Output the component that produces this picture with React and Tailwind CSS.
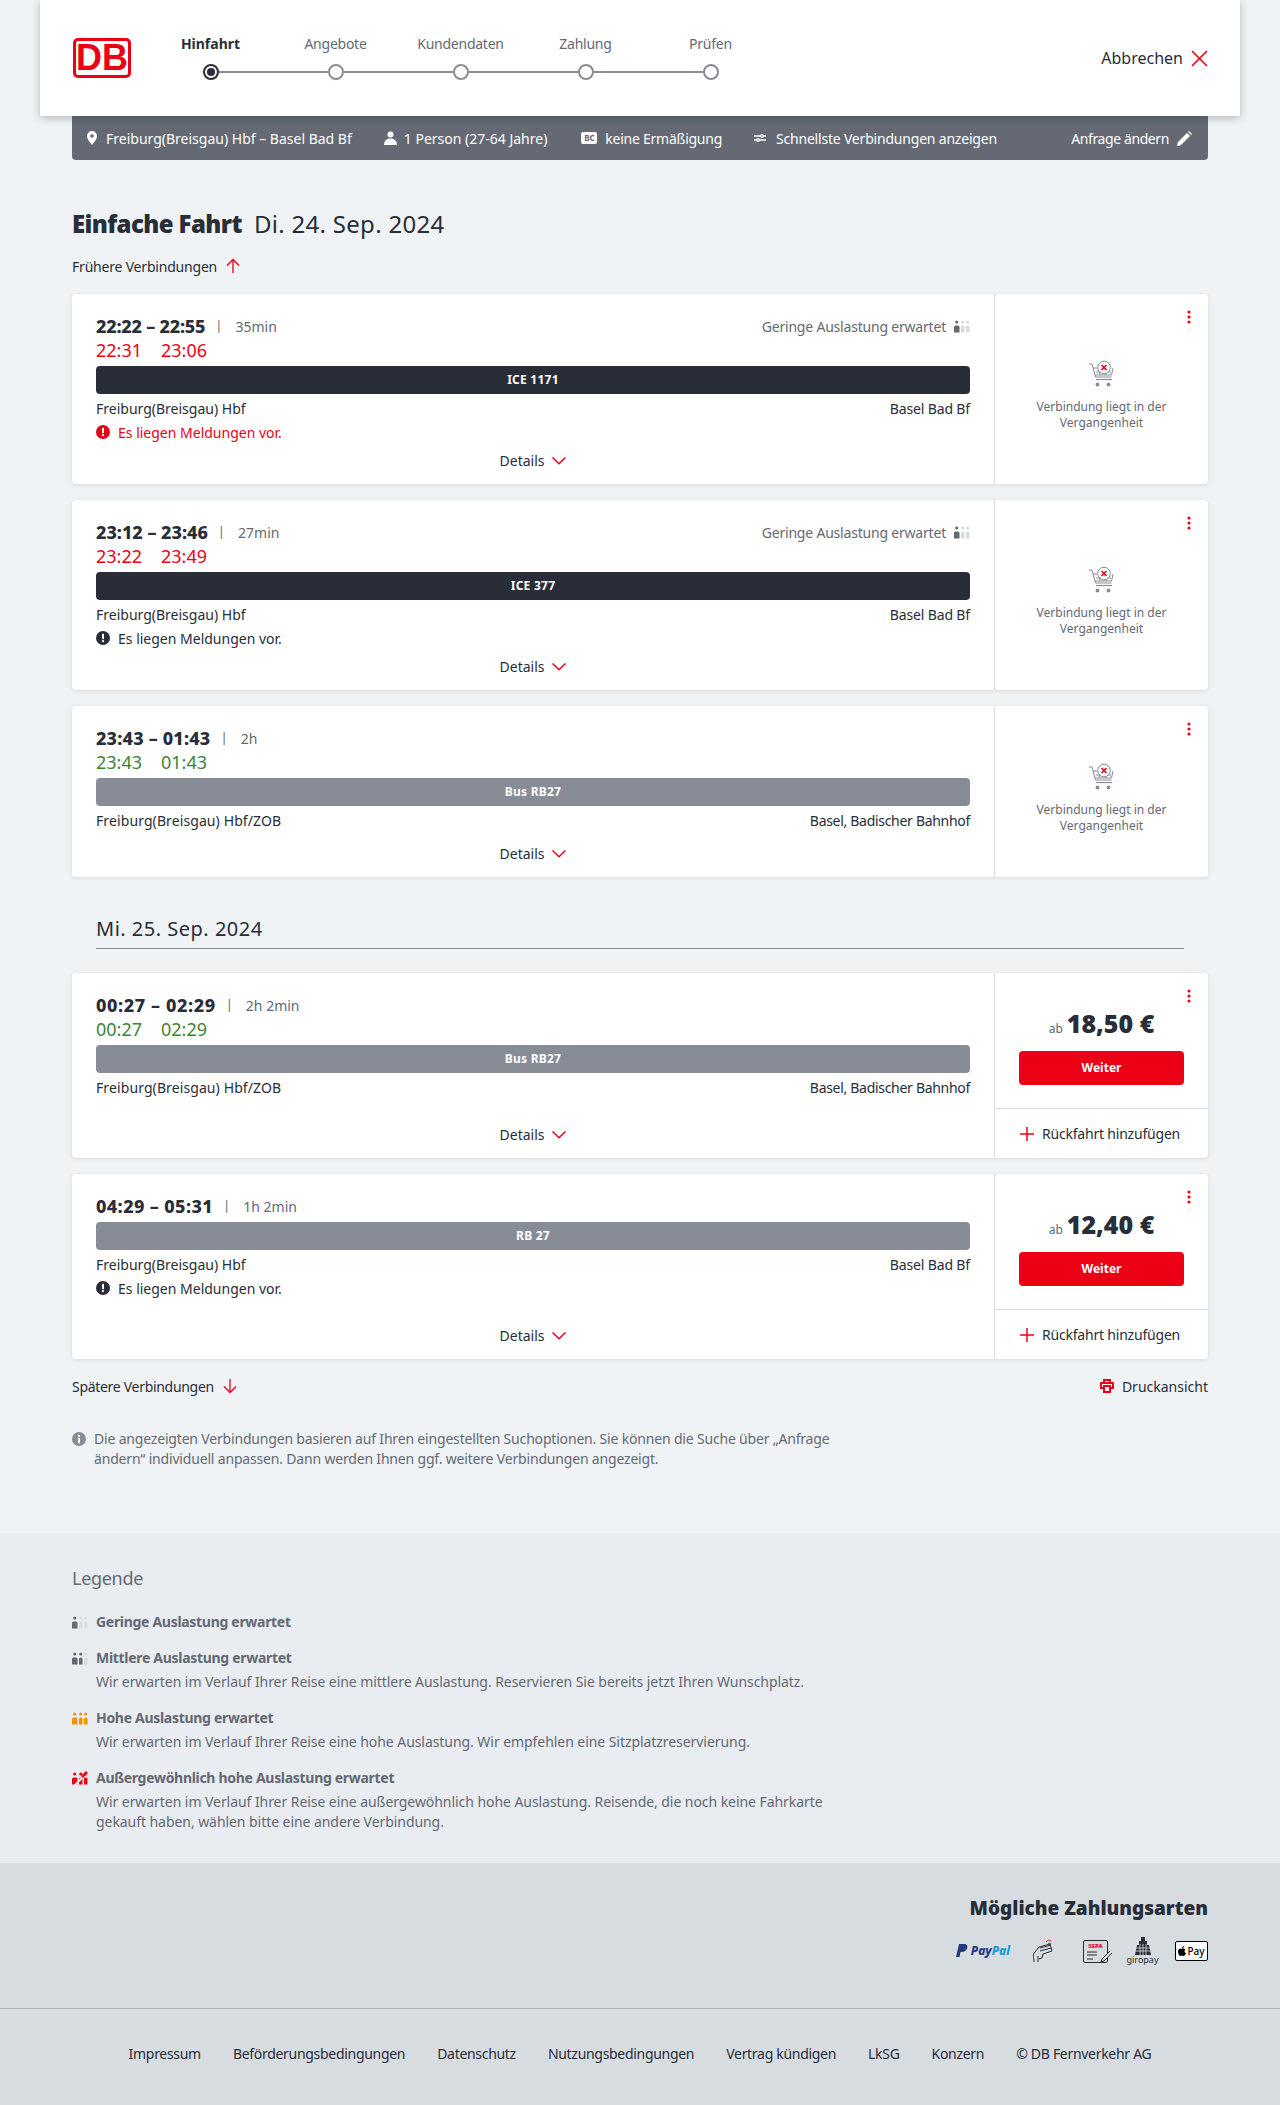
const font = { fontFamily: '"Noto Sans", sans-serif' };

function Chevron() {
  return (
    <svg width="14" height="8" viewBox="0 0 14 8" fill="none" stroke="#ec0016" strokeWidth="1.5">
      <path d="M0.5 0.5 7 6.8 13.5 0.5" />
    </svg>
  );
}

function ArrowUp({ down }) {
  return (
    <svg width="16" height="16" viewBox="0 0 16 16" fill="none" stroke="#ec0016" strokeWidth="1.3" className={down ? "rotate-180" : ""}>
      <path d="M8 15V1.500M2 7.500l6-6 6 6" />
    </svg>
  );
}

function Load({ level = 1 }) {
  const on = level === 3 ? "#f39200" : level === 4 ? "#ec0016" : "#646973";
  const off = "#d7dce1";
  const shown = level === 4 ? 3 : level;
  const xs = [0, 7, 12];
  return (
    <svg width="16" height="14" viewBox="0 0 16 14" className="shrink-0">
      {xs.map((x, i) => {
        const w = i === 0 ? 5.5 : 3.5;
        const c = i < shown ? on : off;
        return (
          <g key={x} fill={c}>
            <circle cx={x + w / 2} cy="3" r="1.6" />
            <path d={`M${x} 13.5V8a1.5 1.5 0 0 1 1.5-1.5h${w - 3}A1.5 1.5 0 0 1 ${x + w} 8v5.5z`} />
          </g>
        );
      })}
      {level === 4 && <path d="M2 15 15 2" stroke="#e9ecf0" strokeWidth="2" />}
      {level === 4 && <path d="M9 5l5-5 2 2-5 5z" fill="#ec0016" />}
    </svg>
  );
}

function AlertIcon({ color }) {
  return (
    <svg width="14" height="14" viewBox="0 0 14 14" className="shrink-0">
      <circle cx="7" cy="7" r="7" fill={color} />
      <rect x="6" y="2.800" width="2" height="5.400" rx="0.600" fill="#fff" />
      <circle cx="7" cy="10.200" r="1.150" fill="#fff" />
    </svg>
  );
}

function Kebab() {
  return (
    <svg width="4" height="14" viewBox="0 0 4 14" fill="#ec0016" className="absolute top-[16px] right-[17px]">
      <circle cx="2" cy="2" r="1.600" />
      <circle cx="2" cy="7" r="1.600" />
      <circle cx="2" cy="12" r="1.600" />
    </svg>
  );
}

function CartIcon() {
  return (
    <svg width="28" height="28" viewBox="0 0 28 28" fill="none" stroke="#878c96" strokeWidth="1">
      <path d="M1 4h3l3.500 13h16" />
      <path d="M5 8h4M25 8l-1.500 7H7" />
      <path d="M8 12h15M11 8.500l1 6.500M19 9l-1 6" />
      <path d="M8 19.500h16" strokeWidth="1.200" />
      <circle cx="9.500" cy="24.500" r="1.900" fill="#878c96" stroke="none" />
      <circle cx="20.500" cy="24.500" r="1.900" fill="#878c96" stroke="none" />
      <circle cx="16" cy="7.500" r="6.300" fill="#fff" />
      <path d="M13.500 5l5 5M18.500 5l-5 5" stroke="#ec0016" strokeWidth="1.600" />
    </svg>
  );
}

function Card({ time, timeTrack, dur, delay, bar, barDark, from, to, wide, load, alert, price, minH }) {
  return (
    <div className={`flex bg-white rounded shadow-[0_1px_4px_rgba(40,45,55,0.12)] ${minH}`}>
      <div className="flex-1 flex flex-col px-6 pt-5">
        <div className="flex items-center h-6">
          <span className={`text-[18px] font-extrabold text-[#282d37] ${timeTrack}`}>{time}</span>
          <span className="ml-[10px] mr-[13px] text-[#646973] text-[13px]">|</span>
          <span className="text-[14px] text-[#646973]">{dur}</span>
          {load && (
            <span className="ml-auto flex items-center gap-2 text-[14px] tracking-[-0.2px] text-[#646973]">
              Geringe Auslastung erwartet
              <Load level={1} />
            </span>
          )}
        </div>
        {delay && (
          <div className="flex h-6 items-center text-[18px] gap-[19px]">
            <span style={{ color: delay.c1 }}>{delay.a}</span>
            <span style={{ color: delay.c1 }}>{delay.b}</span>
          </div>
        )}
        <div className={`mt-1 h-7 rounded flex items-center justify-center text-white text-[12px] font-bold tracking-[0.25px] ${barDark ? "bg-[#282d37]" : "bg-[#878c96]"}`}>
          {bar}
        </div>
        <div className="mt-1 h-5 flex justify-between items-center text-[14px] text-[#282d37]">
          <span className={wide ? "tracking-[0.1px]" : ""}>{from}</span>
          <span className={wide ? "tracking-[-0.3px]" : "tracking-[-0.15px]"}>{to}</span>
        </div>
        {alert && (
          <div className="mt-1 h-5 flex items-center gap-2 text-[14px]" style={{ color: alert }}>
            <AlertIcon color={alert} />
            Es liegen Meldungen vor.
          </div>
        )}
        <div className="mt-auto pt-[9px] pb-[13px] flex items-center justify-center gap-2 text-[14px] text-[#282d37]">
          <span className="h-5 leading-5">Details</span>
          <Chevron />
        </div>
      </div>
      <div className="relative w-[214px] shrink-0 border-l border-[#d7dce1] flex flex-col">
        <Kebab />
        {price ? (
          <>
            <div className="h-[136px] border-b border-[#d7dce1] px-6 pt-[32px] flex flex-col">
              <div className="flex items-baseline justify-center gap-[4px] h-[36px]">
                <span className="text-[12px] text-[#646973]">ab</span>
                <span className="text-[25px] font-black text-[#282d37] leading-[36px]">{price}</span>
              </div>
              <button className="mt-[10px] h-[34px] bg-[#ec0016] rounded text-white text-[12px] font-bold">Weiter</button>
            </div>
            <div className="flex-1 flex items-center justify-center gap-2 pr-[3px] text-[14px] tracking-[-0.2px] text-[#282d37]">
              <svg width="14" height="14" viewBox="0 0 14 14" stroke="#ec0016" strokeWidth="1.500" className="shrink-0">
                <path d="M7 0v14M0 7h14" />
              </svg>
              Rückfahrt hinzufügen
            </div>
          </>
        ) : (
          <div className="flex-1 pt-[13px] flex flex-col items-center justify-center">
            <CartIcon />
            <div className="mt-[11px] text-[12px] leading-4 text-[#646973] text-center">
              Verbindung liegt in der
              <br />
              Vergangenheit
            </div>
          </div>
        )}
      </div>
    </div>
  );
}

function LegendItem({ level, title, children }) {
  return (
    <div className="flex gap-2">
      <div className="h-5 flex items-center"><Load level={level} /></div>
      <div className="text-[14px] leading-5 text-[#646973]">
        <div className="font-bold tracking-[-0.3px]">{title}</div>
        {children && <div className="mt-[4px] tracking-[-0.06px]">{children}</div>}
      </div>
    </div>
  );
}

const steps = ["Hinfahrt", "Angebote", "Kundendaten", "Zahlung", "Prüfen"];
const links = ["Impressum", "Beförderungsbedingungen", "Datenschutz", "Nutzungsbedingungen", "Vertrag kündigen", "LkSG", "Konzern", "© DB Fernverkehr AG"];
const RED = "#ec0016";
const GREEN = "#408335";

export default function App() {
  return (
    <div className="min-h-[2105px] bg-[#f0f3f5] flex flex-col" style={font}>
      {/* header */}
      <header className="relative z-10 mx-10 h-[116px] bg-white shadow-[0_2px_8px_rgba(40,45,55,0.3)] flex items-center pl-[33px] pr-8">
        <div className="w-[58px] h-[40px] bg-[#ec0016] rounded-[5px] p-[3px] shrink-0">
          <div className="w-full h-full bg-white rounded-[2px] flex items-center justify-center text-[#ec0016] text-[36px] font-bold leading-none" style={{ fontFamily: '"Liberation Sans Narrow", "Liberation Sans", sans-serif' }}>
            DB
          </div>
        </div>
        <div className="ml-[17px] w-[625px] self-start pt-[34px]">
          <div className="grid grid-cols-5 text-center text-[14px] leading-5 text-[#646973]">
            {steps.map((s, i) => (
              <span key={s} className={i === 0 ? "font-bold text-[#282d37]" : "tracking-[-0.25px]"}>{s}</span>
            ))}
          </div>
          <div className="ml-[55px] mt-[10px] flex items-center">
            <span className="w-4 h-4 rounded-full border-2 border-[#282d37] flex items-center justify-center shrink-0">
              <span className="w-2 h-2 rounded-full bg-[#282d37]" />
            </span>
            {[1, 2, 3, 4].map((i) => (
              <div key={i} className="flex items-center">
                <span className="w-[109px] h-[2px] bg-[#878c96]" />
                <span className="w-4 h-4 rounded-full border-2 border-[#878c96] bg-white shrink-0" />
              </div>
            ))}
          </div>
        </div>
        <div className="ml-auto flex items-center gap-2 text-[16px] text-[#282d37]">
          Abbrechen
          <svg width="17" height="17" viewBox="0 0 17 17" stroke="#ec0016" strokeWidth="1.600">
            <path d="M1 1l15 15M16 1L1 16" />
          </svg>
        </div>
      </header>

      {/* search summary */}
      <div className="mx-[72px] h-[44px] bg-[#646973] rounded-b flex items-center pl-[15px] pr-4 text-[14px] text-white">
        <svg width="10" height="14" viewBox="0 0 10 14" fill="#fff" className="mr-[9px]">
          <path fillRule="evenodd" d="M5 0a5 5 0 0 1 5 5c0 3.500-5 9-5 9S0 8.500 0 5a5 5 0 0 1 5-5zm0 3.200a1.800 1.800 0 1 0 0 3.600 1.800 1.800 0 0 0 0-3.600z" />
        </svg>
        <span>Freiburg(Breisgau) Hbf – Basel Bad Bf</span>
        <svg width="13" height="14" viewBox="0 0 13 14" fill="#fff" className="ml-8 mr-[7px]">
          <circle cx="6.500" cy="3.500" r="3" />
          <path d="M0 14c0-4 2.500-6.500 6.500-6.500S13 10 13 14z" />
        </svg>
        <span>1 Person (27-64 Jahre)</span>
        <span className="ml-[34px] mr-2 w-4 h-[12px] bg-white rounded-[2px] text-[#646973] text-[8px] font-bold leading-[12px] text-center">BC</span>
        <span className="tracking-[-0.25px]">keine Ermäßigung</span>
        <svg width="12" height="10" viewBox="0 0 12 10" fill="none" stroke="#fff" strokeWidth="1.300" className="ml-8 mr-[10px]">
          <path d="M0 3h12M0 7h12" />
          <circle cx="8" cy="3" r="1.300" fill="#646973" />
          <circle cx="4" cy="7" r="1.300" fill="#646973" />
        </svg>
        <span className="tracking-[-0.2px]">Schnellste Verbindungen anzeigen</span>
        <span className="ml-auto tracking-[-0.4px]">Anfrage ändern</span>
        <svg width="15" height="15" viewBox="0 0 15 15" fill="#fff" className="ml-2">
          <path d="M0 15l.8-3.800L10 2l3 3-9.200 9.200zM11 1l1-1 3 3-1 1z" />
        </svg>
      </div>

      <main className="px-[72px] h-[1373px]">
        <div className="mt-[48px] flex items-baseline text-[24px] leading-8 text-[#282d37]">
          <span className="font-black tracking-[-0.6px]">Einfache Fahrt</span>
          <span className="ml-3 tracking-[0.3px]">Di. 24. Sep. 2024</span>
        </div>
        <div className="mt-[16px] h-5 flex items-center gap-2 text-[14px] tracking-[-0.2px] text-[#282d37]">
          <span>Frühere Verbindungen</span>
          <ArrowUp />
        </div>
        <div className="mt-[18px] flex flex-col gap-4">
          <Card time="22:22 – 22:55" timeTrack="tracking-[-0.2px]" dur="35min" load delay={{ a: "22:31", b: "23:06", c1: RED }} bar="ICE 1171" barDark from="Freiburg(Breisgau) Hbf" to="Basel Bad Bf" alert={RED} />
          <Card time="23:12 – 23:46" timeTrack="tracking-[0px]" dur="27min" load delay={{ a: "23:22", b: "23:49", c1: RED }} bar="ICE 377" barDark from="Freiburg(Breisgau) Hbf" to="Basel Bad Bf" alert="#282d37" />
          <Card time="23:43 – 01:43" timeTrack="tracking-[0.2px]" dur="2h" delay={{ a: "23:43", b: "01:43", c1: GREEN }} bar="Bus RB27" from="Freiburg(Breisgau) Hbf/ZOB" to="Basel, Badischer Bahnhof" wide minH="min-h-[171px]" />
        </div>
        <div className="mt-[36px] mx-6 h-[36px] pt-[2px] border-b border-[#878c96] text-[20px] tracking-[0.5px] leading-7 text-[#282d37]">Mi. 25. Sep. 2024</div>
        <div className="mt-6 flex flex-col gap-4">
          <Card time="00:27 – 02:29" timeTrack="tracking-[0.6px]" dur="2h 2min" delay={{ a: "00:27", b: "02:29", c1: GREEN }} bar="Bus RB27" from="Freiburg(Breisgau) Hbf/ZOB" to="Basel, Badischer Bahnhof" wide price="18,50 €" minH="min-h-[185px]" />
          <Card time="04:29 – 05:31" timeTrack="tracking-[0.4px]" dur="1h 2min" bar="RB 27" from="Freiburg(Breisgau) Hbf" to="Basel Bad Bf" alert="#282d37" price="12,40 €" minH="min-h-[185px]" />
        </div>
        <div className="mt-[17px] h-5 flex items-center text-[14px] text-[#282d37]">
          <span className="mr-2 tracking-[-0.3px]">Spätere Verbindungen</span>
          <ArrowUp down />
          <svg width="14" height="14" viewBox="0 0 14 14" fill="none" stroke="#ec0016" strokeWidth="2" className="ml-auto mr-2">
            <path d="M3.500 9H1V4h12v5h-2.500M4 4V1h6v3M4 7h6v6H4z" />
          </svg>
          <span>Druckansicht</span>
        </div>
        <div className="mt-[33px] flex gap-2 text-[14px] tracking-[-0.18px] leading-5 text-[#646973]">
          <svg width="14" height="14" viewBox="0 0 14 14" className="mt-[3px] shrink-0">
            <circle cx="7" cy="7" r="7" fill="#878c96" />
            <circle cx="7" cy="3.800" r="1.150" fill="#fff" />
            <rect x="6" y="5.800" width="2" height="5.400" rx="0.500" fill="#fff" />
          </svg>
          <p>
            Die angezeigten Verbindungen basieren auf Ihren eingestellten Suchoptionen. Sie können die Suche über „Anfrage
            <br />
            ändern“ individuell anpassen. Dann werden Ihnen ggf. weitere Verbindungen angezeigt.
          </p>
        </div>
      </main>

      {/* legend */}
      <section className="h-[330px] bg-[#e9ecf0] px-[72px] pt-[31px]">
        <h2 className="text-[18px] tracking-[-0.3px] leading-7 text-[#646973]">Legende</h2>
        <div className="mt-[20px] flex flex-col gap-[16px]">
          <LegendItem level={1} title="Geringe Auslastung erwartet" />
          <LegendItem level={2} title="Mittlere Auslastung erwartet">
            Wir erwarten im Verlauf Ihrer Reise eine mittlere Auslastung. Reservieren Sie bereits jetzt Ihren Wunschplatz.
          </LegendItem>
          <LegendItem level={3} title="Hohe Auslastung erwartet">
            Wir erwarten im Verlauf Ihrer Reise eine hohe Auslastung. Wir empfehlen eine Sitzplatzreservierung.
          </LegendItem>
          <LegendItem level={4} title="Außergewöhnlich hohe Auslastung erwartet">
            Wir erwarten im Verlauf Ihrer Reise eine außergewöhnlich hohe Auslastung. Reisende, die noch keine Fahrkarte
            <br />
            gekauft haben, wählen bitte eine andere Verbindung.
          </LegendItem>
        </div>
      </section>

      {/* payment + footer */}
      <footer className="flex-1 bg-[#d7dce1]">
        <div className="h-[146px] border-b border-[#afb4bb] px-[72px] pt-[31px] flex flex-col items-end">
          <h2 className="text-[19px] leading-7 font-black text-[#282d37]">Mögliche Zahlungsarten</h2>
          <div className="mt-[14px] flex items-center h-[30px]">
            <span className="flex items-center gap-[3px]">
              <svg width="12" height="14" viewBox="0 0 12 14">
                <path d="M3 0h5c3 0 4 2 3 4.500S8 8 6 8H4.500L3.500 13H0z" fill="#253b80" />
              </svg>
              <span className="text-[12px] font-extrabold italic text-[#253b80] leading-none">Pay<span className="text-[#179bd7]">Pal</span></span>
            </span>
            <svg width="24" height="24" viewBox="0 0 24 24" fill="none" stroke="#282d37" strokeWidth="1" className="ml-[21px]">
              <path d="M3 23c0-5-2-7 1-10l4-5 11-3 2 7-9 3-1 4-3 1M7 23v-6" />
              <path d="M9 9l11-3M9 12l11-3" />
              <path d="M15 3c2-2 3-2 5-1M17 5c1-1 2-1 3 0" stroke="#ec0016" />
            </svg>
            <span className="ml-[28px] w-[25px] h-[23px] border border-[#282d37] rounded-[2px] text-[6px] font-extrabold text-[#ec0016] leading-[10px] text-center relative">
              SEPA
              <svg width="26" height="12" viewBox="0 0 26 12" fill="none" stroke="#282d37" className="absolute left-[2px] top-[10px]">
                <path d="M1 1h10M1 4h10M1 8h6" />
                <path d="M24 0l-8 8-1 3 3-1 8-8" fill="#d7dce1" />
              </svg>
            </span>
            <span className="ml-[17px] w-[35px] flex flex-col items-center text-[9px] leading-[10px] text-[#282d37]">
              <svg width="16" height="18" viewBox="0 0 16 18" fill="#282d37">
                <path d="M6 0h4v4h2v4h2l2 10H0L2 8h2V4h2z" />
                <path d="M0 11h16M0 14h16M5 7v11M8 7v11M11 7v11" stroke="#d7dce1" strokeWidth="0.800" />
              </svg>
              giropay
            </span>
            <span className="ml-[15px] w-[33px] h-[20px] border border-black rounded-[2px] bg-white text-[10px] leading-[18px] text-black text-center font-medium flex items-center justify-center gap-[1px]">
              <svg width="8" height="10" viewBox="0 0 8 10" fill="#000">
                <path d="M4 3c1-.6 2.500-.6 3.500.5C6 4.500 6.300 6.700 8 7.200 7.400 8.700 6.500 10 5.500 10 4.800 10 4.500 9.600 4 9.600S3 10 2.500 10C1.200 10 0 7.500 0 5.700 0 3.500 1.300 2.600 2.500 2.600 3 2.600 3.600 3 4 3zM4 2.400C4 1.200 5 .2 6 0 6.100 1.200 5 2.400 4 2.400z" />
              </svg>
              Pay
            </span>
          </div>
        </div>
        <nav className="mt-[35px] flex justify-center gap-8 text-[14px] tracking-[-0.3px] leading-5 text-[#282d37]">
          {links.map((l) => (
            <span key={l}>{l}</span>
          ))}
        </nav>
      </footer>
    </div>
  );
}
